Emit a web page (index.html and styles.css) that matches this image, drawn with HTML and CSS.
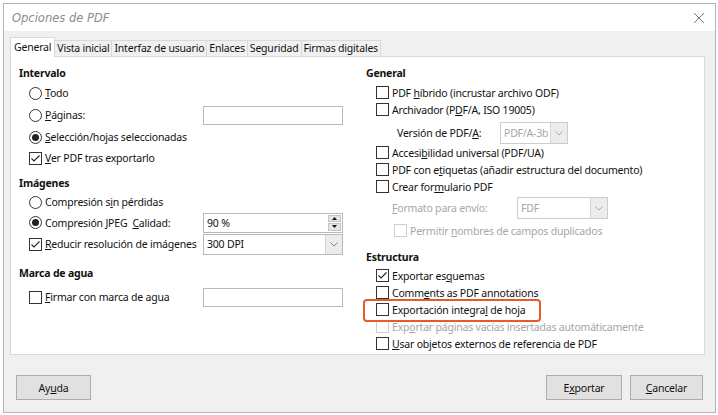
FILE: index.html
```html
<!DOCTYPE html>
<html lang="es">
<head>
    <meta charset="UTF-8">
    <title>Opciones de PDF</title>
    <link rel="stylesheet" href="styles.css">
</head>
<body>
    <div class="dialog">
        <div class="titlebar">
            <span class="title">Opciones de PDF</span>
            <svg class="close" width="12" height="12" viewBox="0 0 12 12">
                <path d="M1 1 L11 11 M11 1 L1 11" stroke="#777" stroke-width="1"/>
            </svg>
        </div>

        <div class="main">
            <div class="tabs">
                <div class="tab active">General</div>
                <div class="tab">Vista inicial</div>
                <div class="tab">Interfaz de usuario</div>
                <div class="tab">Enlaces</div>
                <div class="tab">Seguridad</div>
                <div class="tab">Firmas digitales</div>
            </div>

            <div class="panel">
                <!-- columna izquierda -->
                <div class="col col-left">
                    <div class="heading">Intervalo</div>
                    <div class="opt h22 mt1"><span class="radio"></span><span><u>T</u>odo</span></div>
                    <div class="opt with-field h22">
                        <div class="ctl"><span class="radio"></span><span><u>P</u>áginas:</span></div>
                        <div class="field h19"></div>
                    </div>
                    <div class="opt h22"><span class="radio on"></span><span><u>S</u>elección/hojas seleccionadas</span></div>
                    <div class="opt h20"><span class="check on"><svg width="11" height="11" viewBox="0 0 11 11"><polyline points="1.5,5.5 4,8 9.5,2.5" fill="none" stroke="#222" stroke-width="1.1"/></svg></span><span><u>V</u>er PDF tras exportarlo</span></div>

                    <div class="heading mt7">Imágenes</div>
                    <div class="opt h20 mt1"><span class="radio"></span><span>Compresión s<u>i</u>n pérdidas</span></div>
                    <div class="opt with-field h21">
                        <div class="ctl"><span class="radio on"></span><span>Compresión <u>J</u>PEG&nbsp; <u>C</u>alidad:</span></div>
                        <div class="field h20 spin">
                            <span class="value">90 %</span>
                            <span class="spin-btns">
                                <span class="spin-btn"><svg width="5" height="3" viewBox="0 0 5 3"><polygon points="0,3 2.5,0 5,3" fill="#111"/></svg></span>
                                <span class="spin-btn"><svg width="5" height="3" viewBox="0 0 5 3"><polygon points="0,0 5,0 2.5,3" fill="#111"/></svg></span>
                            </span>
                        </div>
                    </div>
                    <div class="opt with-field h22">
                        <div class="ctl"><span class="check on"><svg width="11" height="11" viewBox="0 0 11 11"><polyline points="1.5,5.5 4,8 9.5,2.5" fill="none" stroke="#222" stroke-width="1.1"/></svg></span><span><u>R</u>educir resolución de imágenes</span></div>
                        <div class="field h21 select">
                            <span class="value">300 DPI</span>
                            <span class="drop"><svg width="8" height="5" viewBox="0 0 8 5"><polyline points="0.5,0.5 4,4 7.5,0.5" fill="none" stroke="#888" stroke-width="1"/></svg></span>
                        </div>
                    </div>

                    <div class="heading mt10">Marca de agua</div>
                    <div class="opt with-field h22 mt5">
                        <div class="ctl"><span class="check"></span><span><u>F</u>irmar con marca de agua</span></div>
                        <div class="field h19"></div>
                    </div>
                </div>

                <!-- columna derecha -->
                <div class="col col-right">
                    <div class="heading">General</div>
                    <div class="opt h17 mt3"><span class="check"></span><span>PDF <u>h</u>íbrido (incrustar archivo ODF)</span></div>
                    <div class="opt h17"><span class="check"></span><span>Archivador (P<u>D</u>F/A, ISO 19005)</span></div>
                    <div class="opt sub h22 mt4 ver">
                        <span class="sub-label">Versión de PDF/<u>A</u>:</span>
                        <div class="field h22 select disabled w68">
                            <span class="value">PDF/A-3b</span>
                            <span class="drop"><svg width="8" height="5" viewBox="0 0 8 5"><polyline points="0.5,0.5 4,4 7.5,0.5" fill="none" stroke="#aaa" stroke-width="1"/></svg></span>
                        </div>
                    </div>
                    <div class="opt h17"><span class="check"></span><span>Accesi<u>b</u>ilidad universal (PDF/UA)</span></div>
                    <div class="opt h17"><span class="check"></span><span>PDF con e<u>t</u>iquetas (añadir estructura del documento)</span></div>
                    <div class="opt h17"><span class="check"></span><span>Crear for<u>m</u>ulario PDF</span></div>
                    <div class="opt sub h22 mt2 fmt">
                        <span class="sub-label muted"><u>F</u>ormato para envío:</span>
                        <div class="field h22 select disabled w91">
                            <span class="value">FDF</span>
                            <span class="drop"><svg width="8" height="5" viewBox="0 0 8 5"><polyline points="0.5,0.5 4,4 7.5,0.5" fill="none" stroke="#aaa" stroke-width="1"/></svg></span>
                        </div>
                    </div>
                    <div class="opt h17 mt3 perm muted"><span class="check off"></span><span>Permitir <u>n</u>ombres de campos duplicados</span></div>

                    <div class="heading mt10">Estructura</div>
                    <div class="opt h17 mt2"><span class="check on"><svg width="11" height="11" viewBox="0 0 11 11"><polyline points="1.5,5.5 4,8 9.5,2.5" fill="none" stroke="#222" stroke-width="1.1"/></svg></span><span>Exportar es<u>q</u>uemas</span></div>
                    <div class="opt h17"><span class="check"></span><span>Comm<u>e</u>nts as PDF annotations</span></div>
                    <div class="opt h17 marked"><span class="check"></span><span>Exportación integra<u>l</u> de hoja</span></div>
                    <div class="opt h17 muted"><span class="check off"></span><span>Exp<u>o</u>rtar páginas vacías insertadas automáticamente</span></div>
                    <div class="opt h17"><span class="check"></span><span><u>U</u>sar objetos externos de referencia de PDF</span></div>
                </div>
            </div>

            <div class="buttons">
                <button class="btn w75">Ay<u>u</u>da</button>
                <span class="spacer"></span>
                <button class="btn w76">E<u>x</u>portar</button>
                <button class="btn w73"><u>C</u>ancelar</button>
            </div>
        </div>
    </div>
</body>
</html>
```

FILE: styles.css
```css
* {
    margin: 0;
    padding: 0;
    box-sizing: border-box;
}

body {
    font-family: 'Noto Sans', 'Liberation Sans', sans-serif;
    font-size: 10.5px;
    letter-spacing: -0.2px;
    color: #111;
    background: #fff;
    width: 718px;
    height: 415px;
    overflow: hidden;
}

u {
    text-decoration-thickness: 1px;
    text-underline-offset: 1px;
}

.dialog {
    margin: 3px 0 0 3px;
    width: 713px;
    height: 410px;
    border: 1px solid #b4b4b4;
    background: #f0f0f0;
    display: flex;
    flex-direction: column;
}

.titlebar {
    height: 27px;
    background: #fff;
    display: flex;
    align-items: center;
    justify-content: space-between;
    padding: 0 10px 0 8px;
}

.title {
    font-family: 'DejaVu Sans', sans-serif;
    font-style: italic;
    font-size: 11.5px;
    letter-spacing: 0;
    color: #8c8c8c;
}

.main {
    flex: 1;
    display: flex;
    flex-direction: column;
    padding: 6px 10px 0 6px;
}

/* pestañas */
.tabs {
    display: flex;
    align-items: flex-end;
    height: 19px;
    padding-left: 1px;
}

.tab {
    height: 16px;
    line-height: 15px;
    padding: 0 2px;
    border: 1px solid #d9d9d9;
    border-bottom: none;
    margin-left: -1px;
    background: #f0f0f0;
}

.tab.active {
    height: 20px;
    line-height: 19px;
    padding: 0 3px;
    background: #fff;
    margin-bottom: -1px;
    position: relative;
    z-index: 1;
}

.panel {
    height: 299px;
    background: #fff;
    border: 1px solid #d9d9d9;
    display: flex;
    padding: 8px 0 0 8px;
}

.col {
    display: flex;
    flex-direction: column;
}

.col-left {
    width: 347px;
}

.col-right {
    flex: 1;
}

.heading {
    height: 16px;
    line-height: 16px;
    font-weight: bold;
}

.opt {
    display: flex;
    align-items: center;
    gap: 3px;
    padding-left: 10px;
    white-space: nowrap;
}

.opt.with-field {
    display: grid;
    grid-template-columns: 174px 140px;
    gap: 0;
    align-items: center;
}

.ctl {
    display: flex;
    align-items: center;
    gap: 3px;
}

.opt.sub {
    gap: 0;
}

.ver {
    padding-left: 31px;
}

.ver .sub-label {
    width: 103px;
}

.fmt {
    padding-left: 26px;
}

.fmt .sub-label {
    width: 125px;
}

.perm {
    padding-left: 28px;
}

.muted {
    color: #a6a6a6;
}

.h17 { height: 17px; }
.h19 { height: 19px; }
.h20 { height: 20px; }
.h21 { height: 21px; }
.h22 { height: 22px; }

.mt1 { margin-top: 1px; }
.mt2 { margin-top: 2px; }
.mt3 { margin-top: 3px; }
.mt4 { margin-top: 4px; }
.mt5 { margin-top: 5px; }
.mt7 { margin-top: 7px; }
.mt10 { margin-top: 10px; }

/* controles */
.check {
    width: 13px;
    height: 13px;
    flex: none;
    border: 1px solid #333;
    background: #fff;
    display: flex;
    align-items: center;
    justify-content: center;
}

.check.off {
    border-color: #cfcfcf;
}

.radio {
    width: 13px;
    height: 13px;
    flex: none;
    border: 1px solid #333;
    border-radius: 50%;
    background: #fff;
    display: flex;
    align-items: center;
    justify-content: center;
}

.radio.on::after {
    content: '';
    width: 7px;
    height: 7px;
    border-radius: 50%;
    background: #222;
}

.field {
    border: 1px solid #b9b9b9;
    background: #fff;
    display: flex;
    align-items: center;
}

.field .value {
    flex: 1;
    padding-left: 3px;
}

.spin-btns {
    width: 14px;
    height: 100%;
    display: flex;
    flex-direction: column;
    gap: 1px;
    padding: 1px 1px 1px 0;
}

.spin-btn {
    flex: 1;
    background: #e5e5e5;
    border: 1px solid #c4c4c4;
    display: flex;
    align-items: center;
    justify-content: center;
}

.select .drop {
    width: 17px;
    height: 100%;
    background: #ececec;
    border-left: 1px solid #d4d4d4;
    display: flex;
    align-items: center;
    justify-content: center;
}

.select.disabled {
    border-color: #cccccc;
    color: #a6a6a6;
}

.w68 { width: 68px; }
.w91 { width: 91px; }

.marked {
    position: relative;
}

.marked::after {
    content: '';
    position: absolute;
    left: -3px;
    top: -2px;
    width: 174px;
    height: 19px;
    border: 2px solid #e9592c;
    border-radius: 4px;
}

/* botones */
.buttons {
    display: flex;
    gap: 8px;
    margin-top: 20px;
    padding: 0 2px 0 6px;
}

.spacer {
    flex: 1;
}

.btn {
    height: 25px;
    font-family: inherit;
    font-size: 10.5px;
    letter-spacing: -0.2px;
    color: #111;
    background: #e1e1e1;
    border: 1px solid #adadad;
}

.w73 { width: 73px; }
.w75 { width: 75px; }
.w76 { width: 76px; }
```
